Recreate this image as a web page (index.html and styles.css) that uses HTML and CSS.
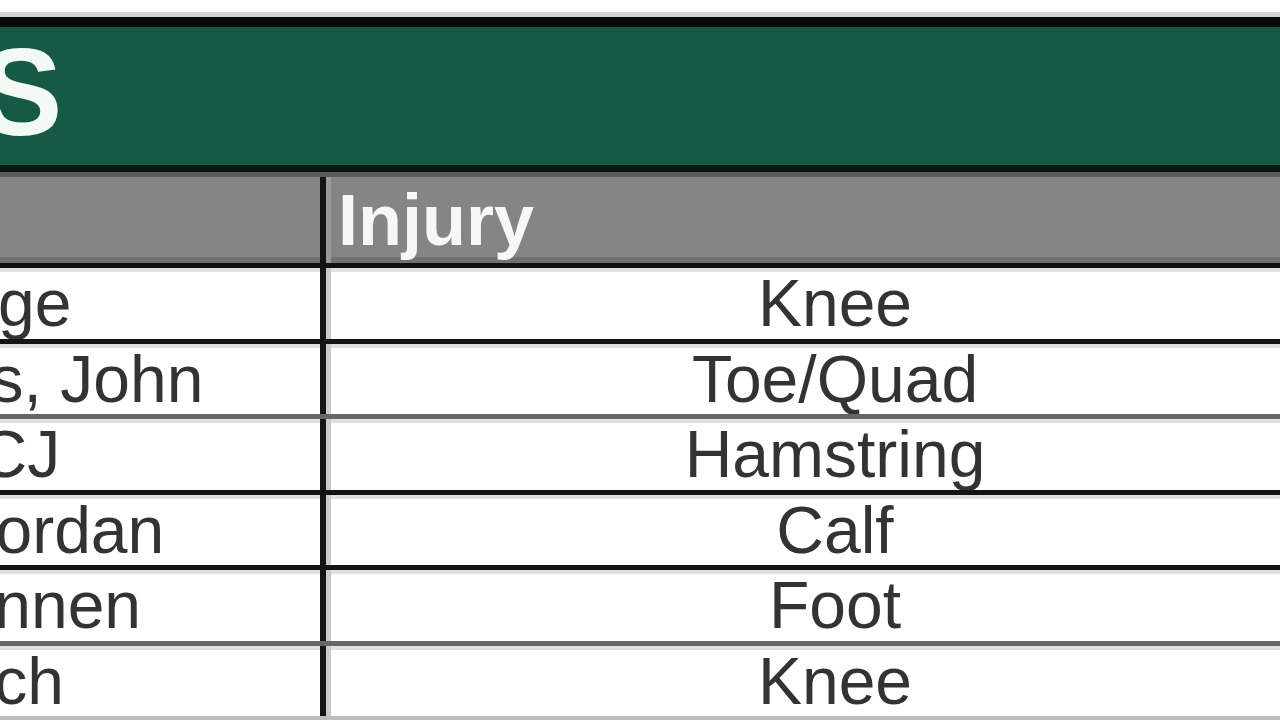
FILE: index.html
```html
<!DOCTYPE html>
<html lang="en">
<head>
<meta charset="utf-8">
<title>Injuries</title>
<link rel="stylesheet" href="styles.css">
</head>
<body>
<div class="sheet">
  <div class="title"><h1>OUTS</h1></div>
  <div class="row head">
    <div class="cell name">Player</div>
    <div class="cell injury">Injury</div>
  </div>
  <div class="row data">
    <div class="cell name">Lee, George</div>
    <div class="cell injury">Knee</div>
  </div>
  <div class="row data soft">
    <div class="cell name">Humphries, John</div>
    <div class="cell injury">Toe/Quad</div>
  </div>
  <div class="row data">
    <div class="cell name">Thomas, CJ</div>
    <div class="cell injury">Hamstring</div>
  </div>
  <div class="row data">
    <div class="cell name">Watson, Jordan</div>
    <div class="cell injury">Calf</div>
  </div>
  <div class="row data soft">
    <div class="cell name">Ross, Brennen</div>
    <div class="cell injury">Foot</div>
  </div>
  <div class="row data last">
    <div class="cell name">Jones, Zach</div>
    <div class="cell injury">Knee</div>
  </div>
</div>
</body>
</html>
```
FILE: styles.css
```css
html, body {
  margin: 0;
  padding: 0;
  overflow: hidden;
  background: #ffffff;
}

body {
  font-family: "Liberation Sans", Arial, sans-serif;
}

.sheet {
  width: 1647px;
  margin-left: -308px;
  margin-top: 12px;
  border-top: 5px solid #d3d3d3;
}

.title {
  box-sizing: border-box;
  height: 155px;
  background: #165a45;
  border-top: 10px solid #060b09;
  border-bottom: 7px solid #0b1511;
  display: flex;
  align-items: center;
  padding: 0 0 8px 26px;
}

.title h1 {
  margin: 0;
  font-size: 124px;
  font-weight: 700;
  line-height: 1;
  color: #f2faf6;
  white-space: nowrap;
}

.row {
  display: grid;
  grid-template-columns: 634px 1fr;
  box-sizing: border-box;
}

.cell {
  display: flex;
  align-items: center;
  white-space: nowrap;
  overflow: hidden;
}

.head {
  height: 96px;
  background: #858585;
  border-top: 5px solid #5b5b5b;
  border-bottom: 5px solid #121212;
  box-shadow: inset 0 -6px 0 #707070;
}

.head .cell {
  font-size: 72px;
  font-weight: 700;
  color: #f7f7f7;
}

.head .name {
  border-right: 6px solid #141414;
  padding-left: 12px;
}

.head .injury {
  border-left: 5px solid #9a9a9a;
  padding-left: 7px;
}

.data {
  height: 75.5px;
  background: #ffffff;
  border-bottom: 5px solid #141414;
  box-shadow: inset 0 4px 0 #e0e0e0;
}

.data.soft {
  border-bottom-color: #666666;
}

.data.last {
  border-bottom-color: #bdbdbd;
}

.data .cell {
  font-size: 66px;
  color: #333333;
}

.data .name {
  border-right: 6px solid #141414;
  padding-left: 12.5px;
}

.data .injury {
  border-left: 5px solid #cbcbcb;
  justify-content: center;
}
```
